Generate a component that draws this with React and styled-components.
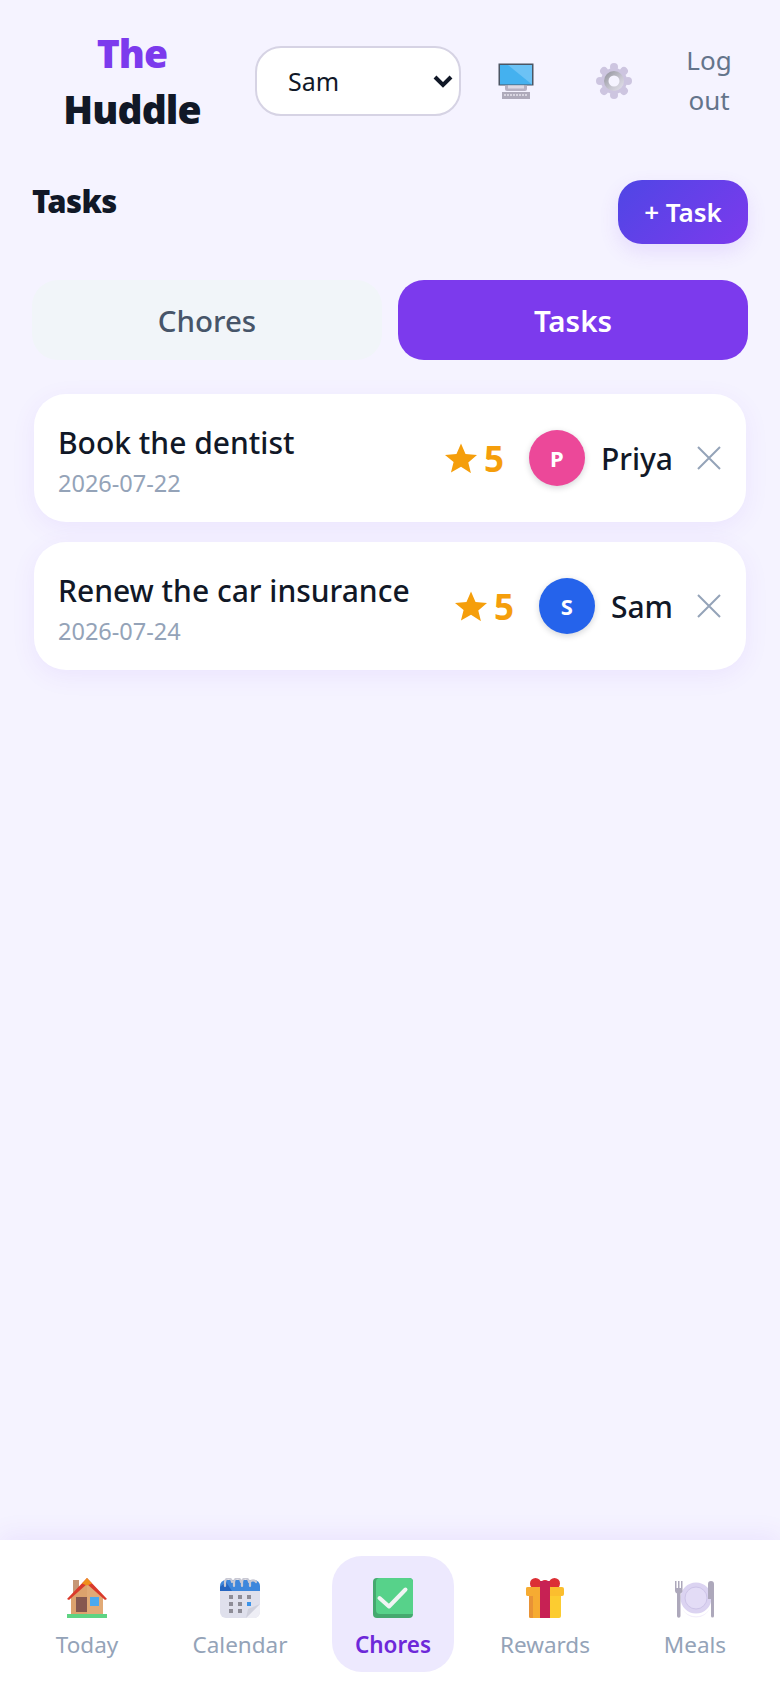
import React from "react";
import styled, { createGlobalStyle } from "styled-components";

const Global = createGlobalStyle`
  html, body { margin: 0; padding: 0; background: #f5f3ff; }
  * { box-sizing: border-box; }
  body { font-family: "Noto Sans", "Open Sans", "Liberation Sans", sans-serif; color: #111827; }
`;

const Page = styled.div`
  min-height: 1688px;
  display: flex;
  flex-direction: column;
  background: #f5f3ff;
`;
const Main = styled.main`
  flex: 1;
  padding: 0 32px;
`;
const Header = styled.header`
  display: grid;
  grid-template-columns: 223px 212px 98px 97px 94px;
  align-items: center;
  padding: 8px 0 0 32px;
  height: 154px;
`;
const Brand = styled.h1`
  margin: 0;
  padding-right: 23px;
  text-align: center;
  font-size: 39px;
  line-height: 56px;
  font-weight: 900;
  letter-spacing: -0.9px;
  color: #111827;
`;
const BrandAccent = styled.span`
  display: block;
  color: #7c3aed;
`;
const SelectWrap = styled.div`
  position: relative;
  width: 206px;
  height: 70px;
`;
const UserSelect = styled.select`
  appearance: none;
  width: 100%;
  height: 100%;
  padding: 0 40px 0 31px;
  border: 2px solid #d6d3e4;
  border-radius: 26px;
  background: #fff;
  color: #111827;
  font: 400 25px "Noto Sans", sans-serif;
`;
const Chevron = styled.svg`
  position: absolute;
  top: 28px;
  right: 8px;
  pointer-events: none;
`;
const IconButton = styled.button`
  justify-self: center;
  display: flex;
  padding: 0;
  border: 0;
  background: none;
`;
const LogOut = styled.button`
  justify-self: center;
  width: 60px;
  margin-top: -2px;
  padding: 0;
  border: 0;
  background: none;
  color: #64748b;
  font: 400 26px/40px "Noto Sans", sans-serif;
  text-align: center;
`;
const SectionHead = styled.div`
  display: flex;
  justify-content: space-between;
  align-items: flex-start;
  padding-top: 26px;
`;
const SectionTitle = styled.h2`
  margin: 0;
  font-size: 31px;
  line-height: 42px;
  font-weight: 900;
  letter-spacing: -0.6px;
`;
const AddButton = styled.button`
  width: 130px;
  height: 64px;
  border: 0;
  border-radius: 24px;
  background: linear-gradient(135deg, #4f46e5, #7c3aed);
  box-shadow: 0 8px 20px rgba(124, 58, 237, 0.12);
  color: #fff;
  font: 600 26px "Noto Sans", sans-serif;
`;
const Tabs = styled.div`
  display: grid;
  grid-template-columns: 1fr 1fr;
  gap: 16px;
  margin-top: 36px;
`;
const Tab = styled.button`
  height: 80px;
  border: 0;
  border-radius: 26px;
  background: ${(p) => (p.$active ? "#7c3aed" : "#f1f5f9")};
  color: ${(p) => (p.$active ? "#fff" : "#475569")};
  font: ${(p) => (p.$active ? 600 : 500)} 29.500px "Noto Sans", sans-serif;
`;
const List = styled.div`
  display: flex;
  flex-direction: column;
  gap: 20px;
  margin: 34px 2px 0;
`;
const Card = styled.article`
  display: flex;
  align-items: center;
  height: 128px;
  padding: 0 24px;
  border-radius: 32px;
  background: #fff;
  box-shadow: 0 6px 24px rgba(124, 58, 237, 0.08);
`;
const CardText = styled.div`
  flex: 1;
  min-width: 0;
  padding-top: 3px;
`;
const CardTitle = styled.div`
  font-size: 30px;
  line-height: 44px;
  font-weight: 500;
  color: #111827;
`;
const CardDate = styled.div`
  margin-top: 2px;
  font-size: 23.500px;
  line-height: 32px;
  color: #94a3b8;
`;
const Points = styled.div`
  display: flex;
  align-items: center;
  gap: 7px;
  margin-right: 25px;
  color: #f59e0b;
  font-size: 35px;
  font-weight: 700;
`;
const Avatar = styled.div`
  width: 56px;
  height: 56px;
  border-radius: 50%;
  display: flex;
  align-items: center;
  justify-content: center;
  background: ${(p) => p.$color};
  box-shadow: 0 2px 6px rgba(17, 24, 39, 0.18);
  color: #fff;
  font-size: 22px;
  font-weight: 700;
`;
const Owner = styled.div`
  margin: 0 23px 0 16px;
  font-size: 30px;
  font-weight: 500;
  color: #111827;
`;
const Remove = styled.button`
  display: flex;
  padding: 0;
  border: 0;
  background: none;
`;
const Nav = styled.nav`
  display: grid;
  grid-template-columns: 154px 152px 154px 150px 1fr;
  align-items: center;
  height: 148px;
  padding: 16px 10px;
  background: #fff;
  box-shadow: 0 -6px 22px rgba(124, 58, 237, 0.08);
`;
const NavItem = styled.a`
  justify-self: center;
  display: flex;
  flex-direction: column;
  align-items: center;
  gap: 11px;
  width: 122px;
  height: 116px;
  padding-top: 22px;
  border-radius: 30px;
  background: ${(p) => (p.$active ? "#ede9fe" : "transparent")};
  color: ${(p) => (p.$active ? "#6d28d9" : "#94a3b8")};
  font-size: 22.500px;
  line-height: 32px;
  font-weight: ${(p) => (p.$active ? 600 : 400)};
`;

const Star = () => (
  <svg width="32" height="30" viewBox="1.500 2 29 26.500" aria-hidden="true">
    <path d="M16 2l4.100 9.600 10.400.9-7.900 6.800 2.400 9.700L16 23.100 6.900 28.500l2.400-9.700-7.800-6.300 10.400-.9z" fill="#f59e0b" />
  </svg>
);
const Close = () => (
  <svg width="26" height="26" viewBox="0 0 26 26" fill="none" stroke="#94a3b8" strokeWidth="2" aria-hidden="true">
    <path d="M2 2l22 22M24 2L2 24" />
  </svg>
);
const Monitor = () => (
  <svg width="36" height="36" viewBox="0 0 36 36" aria-hidden="true">
    <rect x="0.500" y="0.500" width="35" height="22" fill="#4b5563" />
    <rect x="2" y="2" width="32" height="19.500" fill="#44b1ef" />
    <path d="M10 2h24v19.500z" fill="#6cc2f5" />
    <path d="M7 22.500h22v3.500a2 2 0 0 1-2 2H9a2 2 0 0 1-2-2z" fill="#b6b1c2" />
    <rect x="10" y="22.500" width="16" height="3" fill="#dcd9e4" />
    <rect x="4" y="29" width="28" height="7" fill="#aeaaba" />
    <path d="M6 32h24" stroke="#d8d5e0" strokeWidth="2" strokeDasharray="2 1" />
  </svg>
);
const Gear = () => (
  <svg width="36" height="36" viewBox="0 0 36 36" aria-hidden="true">
    <defs>
      <linearGradient id="gearRing" x1="0" y1="0" x2="1" y2="1">
        <stop offset="0" stopColor="#8f9099" />
        <stop offset="0.600" stopColor="#c9c8d2" />
        <stop offset="1" stopColor="#e6e3ef" />
      </linearGradient>
    </defs>
    <g fill="#cdc5e0">
      <circle cx="18" cy="18" r="13" />
      {[0, 45, 90, 135, 180, 225, 270, 315].map((a) => (
        <circle key={a} cx="18" cy="4" r="4" transform={`rotate(${a} 18 18)`} />
      ))}
    </g>
    <circle cx="18" cy="18" r="10" fill="url(#gearRing)" />
    <circle cx="18" cy="18" r="5.500" fill="#f5f3ff" />
  </svg>
);
const House = () => (
  <svg width="40" height="40" viewBox="0 0 40 40" aria-hidden="true">
    <rect x="6" y="2" width="6" height="14" fill="#c69776" />
    <path d="M4 19L20 5l16 14v18H4z" fill="#dca26d" />
    <path d="M20 5l16 14v18H20z" fill="#e3ae7a" opacity="0.7" />
    <path d="M0 21L20 0l20 21-2 1L20 6 2 22z" fill="#da3a2b" />
    <path d="M15 5.500L20 0l5 5.500-5 2z" fill="#ef8f1c" />
    <rect x="9" y="19" width="11" height="15" fill="#86574f" />
    <rect x="23" y="19" width="9" height="9" fill="#4aa9ee" />
    <rect x="0" y="36" width="40" height="4" fill="#5ed483" />
  </svg>
);
const Calendar = () => (
  <svg width="40" height="40" viewBox="0 0 40 40" aria-hidden="true">
    <rect x="0" y="2" width="40" height="38" rx="6" fill="#dfe0ec" />
    <path d="M0 13V8a6 6 0 0 1 6-6h28a6 6 0 0 1 6 6v5z" fill="#3e87dc" />
    <path d="M0 13V9l6-5 6 9z" fill="#2565c0" />
    <g fill="none" stroke="#c9c9d4" strokeWidth="2.200" strokeLinecap="round">
      <path d="M5 9V5a3.500 3.500 0 0 1 7 0M14 9V5a3.500 3.500 0 0 1 7 0M22 9V5a3.500 3.500 0 0 1 7 0M30 9V5a3.500 3.500 0 0 1 6 0" transform="translate(0 -1)" />
    </g>
    <g fill="#8d8c96">
      <rect x="9" y="17" width="4" height="4" /><rect x="18" y="17" width="4" height="4" /><rect x="27" y="17" width="4" height="4" />
      <rect x="9" y="24" width="4" height="4" /><rect x="18" y="24" width="4" height="4" />
      <rect x="9" y="31" width="4" height="4" /><rect x="18" y="31" width="4" height="4" />
    </g>
    <rect x="27" y="24" width="4" height="4" fill="#3b93e8" />
    <path d="M26 40l14-14v8a6 6 0 0 1-6 6z" fill="#eeeef5" />
    <path d="M26 40l2-9 12-5z" fill="#cfd0dc" />
  </svg>
);
const Check = () => (
  <svg width="40" height="40" viewBox="0 0 40 40" aria-hidden="true">
    <rect x="0" y="0" width="40" height="40" rx="4" fill="#45a96f" />
    <path d="M3 4a4 4 0 0 1 4-4h29a4 4 0 0 1 4 4v32H7a4 4 0 0 1-4-4z" fill="#57d28a" />
    <path d="M6.500 20l9.500 8.500L32.500 11.500" fill="none" stroke="#f1f5f4" strokeWidth="4" strokeLinecap="round" strokeLinejoin="round" />
  </svg>
);
const Gift = () => (
  <svg width="38" height="40" viewBox="0 0 38 40" aria-hidden="true">
    <circle cx="9.500" cy="5.500" r="5.500" fill="#dc2f35" />
    <circle cx="28.500" cy="5.500" r="5.500" fill="#dc2f35" />
    <circle cx="19" cy="6" r="4" fill="#dc2f35" />
    <path d="M3 12h32v26a2 2 0 0 1-2 2H5a2 2 0 0 1-2-2z" fill="#fccc30" />
    <path d="M3 12h16v28H5a2 2 0 0 1-2-2z" fill="#f6ab32" />
    <path d="M3 18h4v22H5a2 2 0 0 1-2-2z" fill="#e89236" />
    <rect x="0" y="9" width="38" height="9" rx="2" fill="#fbbe2e" />
    <rect x="0" y="9" width="15" height="9" rx="2" fill="#f6ab32" />
    <rect x="14" y="3" width="10" height="37" fill="#c72154" />
  </svg>
);
const Plate = () => (
  <svg width="40" height="40" viewBox="0 0 40 40" aria-hidden="true">
    <circle cx="21" cy="20" r="15.500" fill="#dbd3f1" />
    <circle cx="21" cy="20" r="11" fill="#e3dcf6" stroke="#cdc4e8" />
    <path d="M7 30a15 15 0 0 0 28 0 16 16 0 0 1-28 0z" fill="#f3effb" />
    <g fill="#ada8bb">
      <path d="M0 3h1.500v7H3V3h1.500v7H6V3h1.500v10a3 3 0 0 1-2 2.600V38a1.500 1.500 0 0 1-3.500 0V15.600A3 3 0 0 1 0 13z" />
      <path d="M33 6a3 3 0 0 1 6 0v32a1.500 1.500 0 0 1-3 0V21h-3z" />
    </g>
  </svg>
);

const navItems = [
  { label: "Today", Icon: House },
  { label: "Calendar", Icon: Calendar },
  { label: "Chores", Icon: Check, active: true },
  { label: "Rewards", Icon: Gift },
  { label: "Meals", Icon: Plate },
];
const tasks = [
  { title: "Book the dentist", date: "2026-07-22", owner: "Priya", initial: "P", color: "#ec4899" },
  { title: "Renew the car insurance", date: "2026-07-24", owner: "Sam", initial: "S", color: "#2563eb" },
];

export default function App() {
  return (
    <Page>
      <Global />
      <Header>
        <Brand>
          <BrandAccent>The</BrandAccent>
          Huddle
        </Brand>
        <SelectWrap>
          <UserSelect defaultValue="Sam" aria-label="User">
            <option>Sam</option>
            <option>Priya</option>
          </UserSelect>
          <Chevron width="20" height="14" viewBox="0 0 20 14" fill="none" stroke="#111827" strokeWidth="4" aria-hidden="true">
            <path d="M2 3l8 8 8-8" />
          </Chevron>
        </SelectWrap>
        <IconButton aria-label="Display"><Monitor /></IconButton>
        <IconButton aria-label="Settings"><Gear /></IconButton>
        <LogOut>Log out</LogOut>
      </Header>
      <Main>
        <SectionHead>
          <SectionTitle>Tasks</SectionTitle>
          <AddButton>+ Task</AddButton>
        </SectionHead>
        <Tabs>
          <Tab>Chores</Tab>
          <Tab $active>Tasks</Tab>
        </Tabs>
        <List>
          {tasks.map((t) => (
            <Card key={t.title}>
              <CardText>
                <CardTitle>{t.title}</CardTitle>
                <CardDate>{t.date}</CardDate>
              </CardText>
              <Points><Star />5</Points>
              <Avatar $color={t.color}>{t.initial}</Avatar>
              <Owner>{t.owner}</Owner>
              <Remove aria-label="Remove"><Close /></Remove>
            </Card>
          ))}
        </List>
      </Main>
      <Nav>
        {navItems.map(({ label, Icon, active }) => (
          <NavItem key={label} $active={active}>
            <Icon />
            {label}
          </NavItem>
        ))}
      </Nav>
    </Page>
  );
}
